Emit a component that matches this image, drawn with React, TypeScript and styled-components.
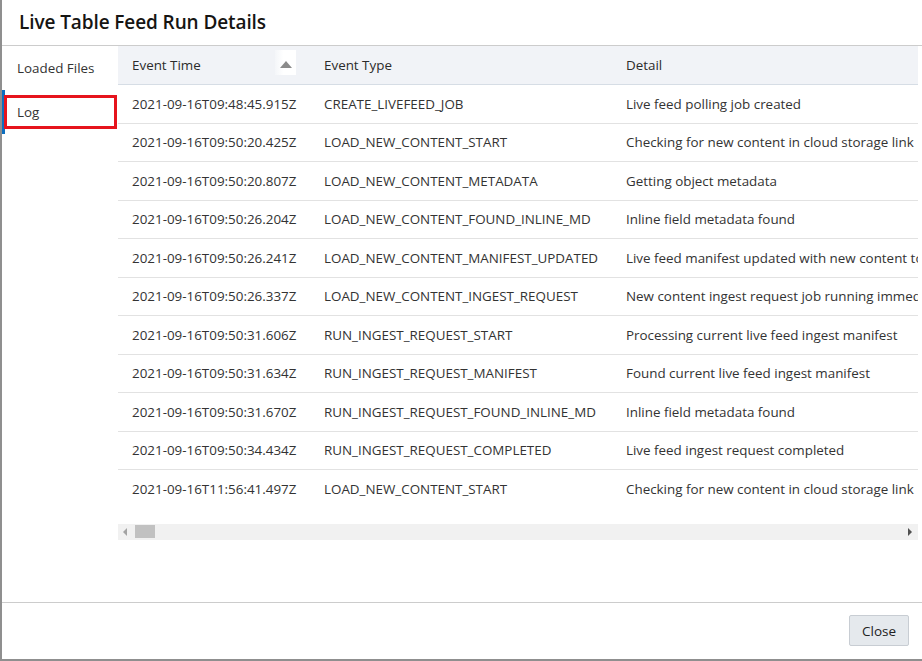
import React from "react";
import styled, { createGlobalStyle } from "styled-components";

const GlobalStyle = createGlobalStyle`
  html, body {
    margin: 0;
    padding: 0;
    width: 922px;
    height: 661px;
    overflow: hidden;
    background: #ffffff;
  }
  * { box-sizing: border-box; }
  body {
    font-family: "Open Sans", "Noto Sans", Arial, sans-serif;
    color: #333333;
  }
`;

const Dialog = styled.div`
  width: 922px;
  height: 661px;
  display: flex;
  flex-direction: column;
  background: #ffffff;
  border-left: 2px solid #8f8f8f;
  border-bottom: 2px solid #8f8f8f;
`;

const TitleBar = styled.div`
  height: 46px;
  flex: none;
  display: flex;
  align-items: center;
  padding: 0 0 2px 17px;
  border-bottom: 1px solid #cccccc;
`;

const Title = styled.h1`
  margin: 0;
  font-size: 19px;
  font-weight: 600;
  color: #161513;
  letter-spacing: -0.1px;
`;

const Body = styled.div`
  flex: 1;
  display: flex;
  min-height: 0;
`;

const Nav = styled.nav`
  width: 116px;
  flex: none;
  display: flex;
  flex-direction: column;
`;

const NavItem = styled.div<{ $active?: boolean }>`
  position: relative;
  height: 44px;
  display: flex;
  align-items: center;
  padding-left: ${(p) => (p.$active ? "12px" : "15px")};
  border-left: ${(p) => (p.$active ? "3px solid #0d6fc0" : "none")};
  font-size: 13.4px;
  color: #333333;
`;

const Highlight = styled.div`
  position: absolute;
  left: -1px;
  top: 5px;
  width: 113px;
  height: 34px;
  border: 3px solid #e6141d;
`;

const TableArea = styled.div`
  width: 800px;
  flex: none;
  display: flex;
  flex-direction: column;
`;

const Viewport = styled.div`
  width: 800px;
  overflow: hidden;
`;

const Grid = styled.div`
  width: 1110px;
  display: flex;
  flex-direction: column;
`;

const HeaderRow = styled.div`
  display: grid;
  grid-template-columns: 192px 302px 1fr;
  height: 39px;
  background: #f1f3f7;
  border-bottom: 1px solid #d6dde5;
  align-items: center;
`;

const Row = styled.div<{ $last?: boolean }>`
  display: grid;
  grid-template-columns: 192px 302px 1fr;
  height: 38.5px;
  align-items: center;
  border-bottom: ${(p) => (p.$last ? "none" : "1px solid #e2e2e2")};
`;

const Cell = styled.div`
  padding: 0 14px;
  font-size: 13.4px;
  color: #333333;
  white-space: nowrap;
`;

const HeadCell = styled(Cell)`
  display: flex;
  align-items: center;
  justify-content: space-between;
  color: #2b2b2b;
`;

const SortBox = styled.div`
  width: 21px;
  height: 25px;
  margin-top: -5px;
  display: flex;
  align-items: center;
  justify-content: center;
  background: linear-gradient(90deg, #f4f6f9 0%, #ffffff 40%, #ffffff 100%);
`;

const SortArrow = styled.div`
  width: 0;
  height: 0;
  margin-top: 4px;
  border-left: 6px solid transparent;
  border-right: 6px solid transparent;
  border-bottom: 7px solid #8b8b8b;
`;

const ScrollBar = styled.div`
  margin-top: 15px;
  height: 16px;
  background: #f1f1f1;
  display: flex;
  align-items: center;
  padding: 0 6px 0 5px;
`;

const ArrowLeft = styled.div`
  width: 0;
  height: 0;
  border-top: 4px solid transparent;
  border-bottom: 4px solid transparent;
  border-right: 4px solid #a3a3a3;
`;

const ArrowRight = styled.div`
  width: 0;
  height: 0;
  margin-left: auto;
  border-top: 4px solid transparent;
  border-bottom: 4px solid transparent;
  border-left: 4px solid #505050;
`;

const Thumb = styled.div`
  width: 20px;
  height: 13px;
  margin-left: 8px;
  background: #c1c1c1;
`;

const Footer = styled.div`
  height: 57px;
  flex: none;
  border-top: 1px solid #cccccc;
  display: flex;
  justify-content: flex-end;
  align-items: flex-start;
  padding: 12px 13px 0 0;
`;

const Button = styled.button`
  width: 60px;
  height: 31px;
  background: #e5e9ed;
  border: 1px solid #c8cdd3;
  border-radius: 2px;
  font-family: "Open Sans", "Noto Sans", Arial, sans-serif;
  font-size: 13.5px;
  color: #222222;
  padding: 0;
`;

const rows: [string, string, string][] = [
  ["2021-09-16T09:48:45.915Z", "CREATE_LIVEFEED_JOB", "Live feed polling job created"],
  ["2021-09-16T09:50:20.425Z", "LOAD_NEW_CONTENT_START", "Checking for new content in cloud storage link"],
  ["2021-09-16T09:50:20.807Z", "LOAD_NEW_CONTENT_METADATA", "Getting object metadata"],
  ["2021-09-16T09:50:26.204Z", "LOAD_NEW_CONTENT_FOUND_INLINE_MD", "Inline field metadata found"],
  ["2021-09-16T09:50:26.241Z", "LOAD_NEW_CONTENT_MANIFEST_UPDATED", "Live feed manifest updated with new content to ingest"],
  ["2021-09-16T09:50:26.337Z", "LOAD_NEW_CONTENT_INGEST_REQUEST", "New content ingest request job running immediately"],
  ["2021-09-16T09:50:31.606Z", "RUN_INGEST_REQUEST_START", "Processing current live feed ingest manifest"],
  ["2021-09-16T09:50:31.634Z", "RUN_INGEST_REQUEST_MANIFEST", "Found current live feed ingest manifest"],
  ["2021-09-16T09:50:31.670Z", "RUN_INGEST_REQUEST_FOUND_INLINE_MD", "Inline field metadata found"],
  ["2021-09-16T09:50:34.434Z", "RUN_INGEST_REQUEST_COMPLETED", "Live feed ingest request completed"],
  ["2021-09-16T11:56:41.497Z", "LOAD_NEW_CONTENT_START", "Checking for new content in cloud storage link"],
];

export default function App() {
  return (
    <>
      <GlobalStyle />
      <Dialog>
        <TitleBar>
          <Title>Live Table Feed Run Details</Title>
        </TitleBar>
        <Body>
          <Nav>
            <NavItem>Loaded Files</NavItem>
            <NavItem $active>
              Log
              <Highlight />
            </NavItem>
          </Nav>
          <TableArea>
            <Viewport>
              <Grid>
                <HeaderRow>
                  <HeadCell>
                    Event Time
                    <SortBox>
                      <SortArrow />
                    </SortBox>
                  </HeadCell>
                  <HeadCell>Event Type</HeadCell>
                  <HeadCell>Detail</HeadCell>
                </HeaderRow>
                {rows.map((r, i) => (
                  <Row key={i} $last={i === rows.length - 1}>
                    <Cell>{r[0]}</Cell>
                    <Cell>{r[1]}</Cell>
                    <Cell>{r[2]}</Cell>
                  </Row>
                ))}
              </Grid>
            </Viewport>
            <ScrollBar>
              <ArrowLeft />
              <Thumb />
              <ArrowRight />
            </ScrollBar>
          </TableArea>
        </Body>
        <Footer>
          <Button>Close</Button>
        </Footer>
      </Dialog>
    </>
  );
}
